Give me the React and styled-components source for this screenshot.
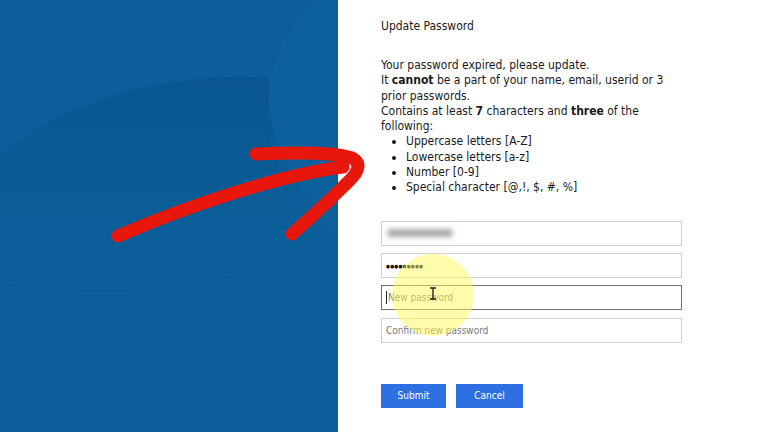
import React from 'react'
import styled, { createGlobalStyle } from 'styled-components'

const GlobalStyle = createGlobalStyle`
  html, body {
    margin: 0;
    padding: 0;
    background: #ffffff;
  }
  body {
    font-family: "DejaVu Sans Condensed", "DejaVu Sans", Verdana, sans-serif;
    color: #1a1a1a;
  }
`

const Page = styled.div`
  position: relative;
  display: flex;
  width: 768px;
  height: 432px;
  overflow: hidden;
`

const BluePanel = styled.div`
  position: relative;
  flex: 0 0 338px;
  height: 100%;
  background: #0b5e99;
  overflow: hidden;
`

const Backdrop = styled.svg`
  display: block;
  width: 100%;
  height: 100%;
`

const FormPanel = styled.main`
  flex: 1;
  padding: 19px 0 0 43px;
  display: flex;
  flex-direction: column;
`

const Title = styled.h1`
  margin: 0;
  font-size: 12px;
  font-weight: normal;
  line-height: 15px;
`

const Rules = styled.div`
  margin-top: 24px;
  font-size: 12px;
  line-height: 15.3px;
  width: 310px;

  p {
    margin: 0;
  }

  b {
    font-weight: bold;
  }
`

const RuleList = styled.ul`
  margin: 0;
  padding-left: 25px;
  list-style: disc;
`

const Fields = styled.div`
  margin-top: 25px;
  display: flex;
  flex-direction: column;
  gap: 7.4px;
  width: 301px;
`

const Field = styled.div`
  box-sizing: border-box;
  height: 25px;
  border: 1px solid ${(p) => (p.$focused ? '#707070' : '#cfcfcf')};
  display: flex;
  align-items: center;
  padding-left: 4px;
  font-size: 10px;
  color: ${(p) => (p.$muted ? '#7b7b7b' : '#222')};
`

const Blurred = styled.span`
  display: inline-block;
  width: 66px;
  height: 8px;
  margin-left: 1px;
  border-radius: 4px;
  background: #a9a9a9;
  filter: blur(2.5px);
`

const Dots = styled.span`
  font-size: 5px;
  letter-spacing: 0.2px;
  color: #111;
`

const Caret = styled.span`
  display: inline-block;
  width: 1px;
  height: 13px;
  background: #222;
  margin-right: 1px;
`

const Actions = styled.div`
  margin-top: 41px;
  display: flex;
  gap: 10px;
`

const Button = styled.button`
  box-sizing: border-box;
  width: ${(p) => p.$w}px;
  height: 24px;
  border: none;
  background: #2e6fe2;
  color: #ffffff;
  font-family: inherit;
  font-size: 10px;
  cursor: pointer;
`

const Highlight = styled.div`
  position: absolute;
  left: 392px;
  top: 254px;
  width: 82px;
  height: 82px;
  border-radius: 50%;
  background: rgba(255, 250, 90, 0.5);
  pointer-events: none;
`

const Overlay = styled.svg`
  position: absolute;
  left: 0;
  top: 0;
  width: 768px;
  height: 432px;
  pointer-events: none;
`

const App = () => {
  return (
    <>
      <GlobalStyle />
      <Page>
        <BluePanel>
          <Backdrop viewBox="0 0 338 432">
            <defs>
              <linearGradient id="shade" x1="0" y1="0" x2="0" y2="1">
                <stop offset="0" stopColor="#064f86" stopOpacity="0.55" />
                <stop offset="1" stopColor="#0b5e99" stopOpacity="0" />
              </linearGradient>
            </defs>
            <circle cx="420" cy="110" r="152" fill="#0c609c" stroke="#0e64a0" strokeWidth="1" />
            <path
              d="M -20 175 C 40 110, 150 70, 270 78 C 262 120, 290 190, 338 228 L 338 232 C 250 290, 120 305, -20 280 Z"
              fill="url(#shade)"
            />
            <path d="M -20 280 C 120 305, 250 290, 338 228" fill="none" stroke="#0a5a94" strokeWidth="1" />
          </Backdrop>
        </BluePanel>

        <FormPanel>
          <Title>Update Password</Title>
          <Rules>
            <p>Your password expired, please update.</p>
            <p>
              It <b>cannot</b> be a part of your name, email, userid or 3 prior passwords.
            </p>
            <p>
              Contains at least <b>7</b> characters and <b>three</b> of the following:
            </p>
            <RuleList>
              <li>Uppercase letters [A-Z]</li>
              <li>Lowercase letters [a-z]</li>
              <li>Number [0-9]</li>
              <li>Special character [@,!, $, #, %]</li>
            </RuleList>
          </Rules>

          <Fields>
            <Field>
              <Blurred />
            </Field>
            <Field>
              <Dots>●●●●●●●●●</Dots>
            </Field>
            <Field $focused $muted>
              <Caret />
              New password
            </Field>
            <Field $muted>Confirm new password</Field>
          </Fields>

          <Actions>
            <Button $w={65}>Submit</Button>
            <Button $w={67}>Cancel</Button>
          </Actions>
        </FormPanel>

        <Highlight />

        <Overlay viewBox="0 0 768 432">
          <g fill="none" stroke="#e8170c" strokeWidth="13" strokeLinecap="round" strokeLinejoin="round">
            <path d="M 118 236 C 190 205, 280 175, 343 167" />
            <path d="M 256 154 C 300 152, 335 152, 352 158 C 362 163, 358 172, 350 180 C 330 200, 310 218, 292 234" />
          </g>
          <g stroke="#222" strokeWidth="1.4" fill="none">
            <path d="M 430 288 L 436 288 M 433 288 L 433 299 M 430 299 L 436 299" />
          </g>
        </Overlay>
      </Page>
    </>
  )
}

export default App
